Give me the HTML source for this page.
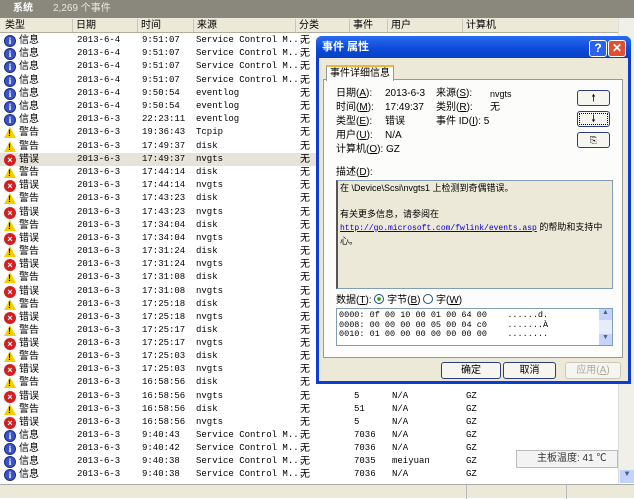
<!DOCTYPE html>
<html><head><meta charset="utf-8"><style>
*{margin:0;padding:0;box-sizing:border-box}
body{width:634px;height:498px;overflow:hidden;background:#fff;font-family:"Liberation Mono","Noto Sans CJK SC",monospace;font-size:9px;color:#000;position:relative}
.cj{font-family:"Liberation Sans","Noto Sans CJK SC",sans-serif}
#top{position:absolute;left:0;top:0;width:634px;height:18px;background:#8a887c;color:#fff;font-size:10px;line-height:14px}
#hdr{position:absolute;left:0;top:18px;width:618px;height:15px;background:#ece9d8;border-bottom:1px solid #b0ad9c;font-size:10px;line-height:13px}
#hdr span{position:absolute;top:1px;border-left:1px solid #c8c5b2;padding-left:3px;height:13px}
.r{position:absolute;left:0;width:618px;height:13px;line-height:13px}
.r span{position:absolute;top:0;white-space:nowrap}
.r span.cj{font-size:10px}
.hl{background:#e6e4da}
.ic{position:absolute;left:4px;top:1px;width:12px;height:12px}
.i{border-radius:50%;background:#3a55c8;border:1px solid #1b2a80;color:#fff;font:bold 9px "Liberation Serif";text-align:center;line-height:10px}
.w{width:0;height:0;border-left:6px solid transparent;border-right:6px solid transparent;border-bottom:11px solid #f5d000}
.w:after{content:"!";position:absolute;left:-2px;top:1px;font:bold 9px "Liberation Sans";color:#000}
.e{border-radius:50%;background:#d22020;color:#fff;font:bold 9px "Liberation Sans";text-align:center;line-height:12px}
#sb{position:absolute;left:618px;top:18px;width:16px;height:465px;background:#f0efe8;border-left:1px solid #ddd}
#status{position:absolute;left:0;top:484px;width:634px;height:14px;background:#ece9d8;border-top:1px solid #aaa}
#dlg{position:absolute;left:316px;top:36px;width:315px;height:348px;background:#0b3ed0;border-radius:6px 6px 0 0}
#tb{height:22px;color:#fff;font:bold 11px "Liberation Sans","Noto Sans CJK SC",sans-serif;line-height:22px;padding-left:6px;background:linear-gradient(#2a6cf0,#0a4ad8 60%,#0840c4);border-radius:6px 6px 0 0}
#body{position:absolute;left:3px;top:22px;width:309px;height:323px;background:#ece9d8}
.btn{position:absolute;background:#f6f5ef;border:1px solid #2c3d7a;border-radius:3px;text-align:center;font-size:10px;line-height:15px}
.lbl{position:absolute;font-size:10px;line-height:12px;white-space:nowrap}
</style></head><body>
<div id="top" class="cj"><span style="position:absolute;left:13px;top:2px;font-weight:bold">系统</span><span style="position:absolute;left:53px;top:2px;color:#e8e8e0">2,269 个事件</span></div>
<div id="hdr" class="cj"><span style="left:2px;border:0">类型</span><span style="left:72px">日期</span><span style="left:137px">时间</span><span style="left:193px">来源</span><span style="left:295px">分类</span><span style="left:349px">事件</span><span style="left:387px">用户</span><span style="left:462px">计算机</span></div>

<div class="r" style="top:34px"><i class="ic i">i</i><span class="cj" style="left:19px">信息</span><span style="left:77px">2013-6-4</span><span style="left:142px">9:51:07</span><span style="left:196px">Service Control M...</span><span class="cj" style="left:300px">无</span></div>
<div class="r" style="top:47px"><i class="ic i">i</i><span class="cj" style="left:19px">信息</span><span style="left:77px">2013-6-4</span><span style="left:142px">9:51:07</span><span style="left:196px">Service Control M...</span><span class="cj" style="left:300px">无</span></div>
<div class="r" style="top:60px"><i class="ic i">i</i><span class="cj" style="left:19px">信息</span><span style="left:77px">2013-6-4</span><span style="left:142px">9:51:07</span><span style="left:196px">Service Control M...</span><span class="cj" style="left:300px">无</span></div>
<div class="r" style="top:74px"><i class="ic i">i</i><span class="cj" style="left:19px">信息</span><span style="left:77px">2013-6-4</span><span style="left:142px">9:51:07</span><span style="left:196px">Service Control M...</span><span class="cj" style="left:300px">无</span></div>
<div class="r" style="top:87px"><i class="ic i">i</i><span class="cj" style="left:19px">信息</span><span style="left:77px">2013-6-4</span><span style="left:142px">9:50:54</span><span style="left:196px">eventlog</span><span class="cj" style="left:300px">无</span></div>
<div class="r" style="top:100px"><i class="ic i">i</i><span class="cj" style="left:19px">信息</span><span style="left:77px">2013-6-4</span><span style="left:142px">9:50:54</span><span style="left:196px">eventlog</span><span class="cj" style="left:300px">无</span></div>
<div class="r" style="top:113px"><i class="ic i">i</i><span class="cj" style="left:19px">信息</span><span style="left:77px">2013-6-3</span><span style="left:142px">22:23:11</span><span style="left:196px">eventlog</span><span class="cj" style="left:300px">无</span></div>
<div class="r" style="top:126px"><i class="ic w"></i><span class="cj" style="left:19px">警告</span><span style="left:77px">2013-6-3</span><span style="left:142px">19:36:43</span><span style="left:196px">Tcpip</span><span class="cj" style="left:300px">无</span></div>
<div class="r" style="top:140px"><i class="ic w"></i><span class="cj" style="left:19px">警告</span><span style="left:77px">2013-6-3</span><span style="left:142px">17:49:37</span><span style="left:196px">disk</span><span class="cj" style="left:300px">无</span></div>
<div class="r hl" style="top:153px"><i class="ic e">×</i><span class="cj" style="left:19px">错误</span><span style="left:77px">2013-6-3</span><span style="left:142px">17:49:37</span><span style="left:196px">nvgts</span><span class="cj" style="left:300px">无</span></div>
<div class="r" style="top:166px"><i class="ic w"></i><span class="cj" style="left:19px">警告</span><span style="left:77px">2013-6-3</span><span style="left:142px">17:44:14</span><span style="left:196px">disk</span><span class="cj" style="left:300px">无</span></div>
<div class="r" style="top:179px"><i class="ic e">×</i><span class="cj" style="left:19px">错误</span><span style="left:77px">2013-6-3</span><span style="left:142px">17:44:14</span><span style="left:196px">nvgts</span><span class="cj" style="left:300px">无</span></div>
<div class="r" style="top:192px"><i class="ic w"></i><span class="cj" style="left:19px">警告</span><span style="left:77px">2013-6-3</span><span style="left:142px">17:43:23</span><span style="left:196px">disk</span><span class="cj" style="left:300px">无</span></div>
<div class="r" style="top:206px"><i class="ic e">×</i><span class="cj" style="left:19px">错误</span><span style="left:77px">2013-6-3</span><span style="left:142px">17:43:23</span><span style="left:196px">nvgts</span><span class="cj" style="left:300px">无</span></div>
<div class="r" style="top:219px"><i class="ic w"></i><span class="cj" style="left:19px">警告</span><span style="left:77px">2013-6-3</span><span style="left:142px">17:34:04</span><span style="left:196px">disk</span><span class="cj" style="left:300px">无</span></div>
<div class="r" style="top:232px"><i class="ic e">×</i><span class="cj" style="left:19px">错误</span><span style="left:77px">2013-6-3</span><span style="left:142px">17:34:04</span><span style="left:196px">nvgts</span><span class="cj" style="left:300px">无</span></div>
<div class="r" style="top:245px"><i class="ic w"></i><span class="cj" style="left:19px">警告</span><span style="left:77px">2013-6-3</span><span style="left:142px">17:31:24</span><span style="left:196px">disk</span><span class="cj" style="left:300px">无</span></div>
<div class="r" style="top:258px"><i class="ic e">×</i><span class="cj" style="left:19px">错误</span><span style="left:77px">2013-6-3</span><span style="left:142px">17:31:24</span><span style="left:196px">nvgts</span><span class="cj" style="left:300px">无</span></div>
<div class="r" style="top:271px"><i class="ic w"></i><span class="cj" style="left:19px">警告</span><span style="left:77px">2013-6-3</span><span style="left:142px">17:31:08</span><span style="left:196px">disk</span><span class="cj" style="left:300px">无</span></div>
<div class="r" style="top:285px"><i class="ic e">×</i><span class="cj" style="left:19px">错误</span><span style="left:77px">2013-6-3</span><span style="left:142px">17:31:08</span><span style="left:196px">nvgts</span><span class="cj" style="left:300px">无</span></div>
<div class="r" style="top:298px"><i class="ic w"></i><span class="cj" style="left:19px">警告</span><span style="left:77px">2013-6-3</span><span style="left:142px">17:25:18</span><span style="left:196px">disk</span><span class="cj" style="left:300px">无</span></div>
<div class="r" style="top:311px"><i class="ic e">×</i><span class="cj" style="left:19px">错误</span><span style="left:77px">2013-6-3</span><span style="left:142px">17:25:18</span><span style="left:196px">nvgts</span><span class="cj" style="left:300px">无</span></div>
<div class="r" style="top:324px"><i class="ic w"></i><span class="cj" style="left:19px">警告</span><span style="left:77px">2013-6-3</span><span style="left:142px">17:25:17</span><span style="left:196px">disk</span><span class="cj" style="left:300px">无</span></div>
<div class="r" style="top:337px"><i class="ic e">×</i><span class="cj" style="left:19px">错误</span><span style="left:77px">2013-6-3</span><span style="left:142px">17:25:17</span><span style="left:196px">nvgts</span><span class="cj" style="left:300px">无</span></div>
<div class="r" style="top:350px"><i class="ic w"></i><span class="cj" style="left:19px">警告</span><span style="left:77px">2013-6-3</span><span style="left:142px">17:25:03</span><span style="left:196px">disk</span><span class="cj" style="left:300px">无</span></div>
<div class="r" style="top:363px"><i class="ic e">×</i><span class="cj" style="left:19px">错误</span><span style="left:77px">2013-6-3</span><span style="left:142px">17:25:03</span><span style="left:196px">nvgts</span><span class="cj" style="left:300px">无</span></div>
<div class="r" style="top:376px"><i class="ic w"></i><span class="cj" style="left:19px">警告</span><span style="left:77px">2013-6-3</span><span style="left:142px">16:58:56</span><span style="left:196px">disk</span><span class="cj" style="left:300px">无</span></div>
<div class="r" style="top:390px"><i class="ic e">×</i><span class="cj" style="left:19px">错误</span><span style="left:77px">2013-6-3</span><span style="left:142px">16:58:56</span><span style="left:196px">nvgts</span><span class="cj" style="left:300px">无</span><span style="left:354px">5</span><span style="left:392px">N/A</span><span style="left:466px">GZ</span></div>
<div class="r" style="top:403px"><i class="ic w"></i><span class="cj" style="left:19px">警告</span><span style="left:77px">2013-6-3</span><span style="left:142px">16:58:56</span><span style="left:196px">disk</span><span class="cj" style="left:300px">无</span><span style="left:354px">51</span><span style="left:392px">N/A</span><span style="left:466px">GZ</span></div>
<div class="r" style="top:416px"><i class="ic e">×</i><span class="cj" style="left:19px">错误</span><span style="left:77px">2013-6-3</span><span style="left:142px">16:58:56</span><span style="left:196px">nvgts</span><span class="cj" style="left:300px">无</span><span style="left:354px">5</span><span style="left:392px">N/A</span><span style="left:466px">GZ</span></div>
<div class="r" style="top:429px"><i class="ic i">i</i><span class="cj" style="left:19px">信息</span><span style="left:77px">2013-6-3</span><span style="left:142px">9:40:43</span><span style="left:196px">Service Control M...</span><span class="cj" style="left:300px">无</span><span style="left:354px">7036</span><span style="left:392px">N/A</span><span style="left:466px">GZ</span></div>
<div class="r" style="top:442px"><i class="ic i">i</i><span class="cj" style="left:19px">信息</span><span style="left:77px">2013-6-3</span><span style="left:142px">9:40:42</span><span style="left:196px">Service Control M...</span><span class="cj" style="left:300px">无</span><span style="left:354px">7036</span><span style="left:392px">N/A</span><span style="left:466px">GZ</span></div>
<div class="r" style="top:455px"><i class="ic i">i</i><span class="cj" style="left:19px">信息</span><span style="left:77px">2013-6-3</span><span style="left:142px">9:40:38</span><span style="left:196px">Service Control M...</span><span class="cj" style="left:300px">无</span><span style="left:354px">7035</span><span style="left:392px">meiyuan</span><span style="left:466px">GZ</span></div>
<div class="r" style="top:468px"><i class="ic i">i</i><span class="cj" style="left:19px">信息</span><span style="left:77px">2013-6-3</span><span style="left:142px">9:40:38</span><span style="left:196px">Service Control M...</span><span class="cj" style="left:300px">无</span><span style="left:354px">7036</span><span style="left:392px">N/A</span><span style="left:466px">GZ</span></div>

<div id="sb"><div style="position:absolute;left:1px;top:452px;width:14px;height:13px;background:#c4d3fb;color:#4d6185;text-align:center;font-size:8px">▼</div></div>
<div style="position:absolute;left:516px;top:450px;width:102px;height:18px;background:#f3f3f3;border:1px solid #bbb;font-size:10px;line-height:16px;padding-left:20px;color:#333" class="cj">主板温度: 41 ℃</div>
<div id="status"><div style="position:absolute;left:466px;top:0;width:1px;height:14px;background:#bbb"></div><div style="position:absolute;left:566px;top:0;width:1px;height:14px;background:#bbb"></div></div>

<div id="dlg">
<div id="tb">事件 属性</div>
<div style="position:absolute;left:273px;top:4px;width:18px;height:17px;background:#2a62ea;border:1px solid #fff;border-radius:3px;color:#fff;font:bold 12px 'Liberation Sans';text-align:center;line-height:15px">?</div>
<div style="position:absolute;left:292px;top:4px;width:18px;height:17px;background:#e05030;border:1px solid #fff;border-radius:3px;color:#fff;font:bold 12px 'Liberation Sans';text-align:center;line-height:15px">✕</div>
<div id="body" class="cj">
<div style="position:absolute;left:4px;top:21px;width:300px;height:279px;background:#fcfcfa;border:1px solid #919b9c"></div>
<div style="position:absolute;left:7px;top:7px;width:68px;height:16px;background:#fcfcfa;border:1px solid #919b9c;border-bottom:0;border-top:2px solid #f5b33c;font-size:10px;text-align:center;line-height:13px">事件详细信息</div>
<div class="lbl" style="left:17px;top:30px">日期(<u>A</u>):</div><div class="lbl" style="left:66px;top:30px">2013-6-3</div><div class="lbl" style="left:117px;top:30px">来源(<u>S</u>):</div><div class="lbl" style="left:171px;top:30px;font-size:9px">nvgts</div>
<div class="lbl" style="left:17px;top:44px">时间(<u>M</u>):</div><div class="lbl" style="left:66px;top:44px">17:49:37</div><div class="lbl" style="left:117px;top:44px">类别(<u>R</u>):</div><div class="lbl" style="left:171px;top:44px">无</div>
<div class="lbl" style="left:17px;top:58px">类型(<u>E</u>):</div><div class="lbl" style="left:66px;top:58px">错误</div><div class="lbl" style="left:117px;top:58px">事件 ID(<u>I</u>): 5</div>
<div class="lbl" style="left:17px;top:72px">用户(<u>U</u>):</div><div class="lbl" style="left:66px;top:72px">N/A</div>
<div class="lbl" style="left:17px;top:86px">计算机(<u>O</u>): GZ</div>
<div class="btn" style="left:258px;top:32px;width:33px;height:16px">🠕</div>
<div class="btn" style="left:258px;top:53px;width:33px;height:16px;outline:1px dotted #000;outline-offset:-3px">🠗</div>
<div class="btn" style="left:258px;top:74px;width:33px;height:16px;font-size:9px">⎘</div>
<div class="lbl" style="left:17px;top:109px">描述(<u>D</u>):</div>
<div style="position:absolute;left:17px;top:122px;width:277px;height:109px;background:#ece9d8;border:1px solid #7f9db9;border-left:2px solid #555;font-size:9px;line-height:13px;padding:1px 2px;white-space:nowrap;overflow:hidden">在 \Device\Scsi\nvgts1 上检测到奇偶错误。<br><br>有关更多信息，请参阅在<br><span style="color:#00c;text-decoration:underline;font-family:'Liberation Mono',monospace;font-size:8px">http://go.microsoft.com/fwlink/events.asp</span> 的帮助和支持中<br>心。</div>
<div class="lbl" style="left:17px;top:236px">数据(<u>T</u>): <span style="display:inline-block;width:10px;height:10px;border:1px solid #1c5180;border-radius:50%;background:radial-gradient(#2a9a2a 30%,#fff 35%);vertical-align:-1px"></span> 字节(<u>B</u>) <span style="display:inline-block;width:10px;height:10px;border:1px solid #1c5180;border-radius:50%;background:#fff;vertical-align:-1px"></span> 字(<u>W</u>)</div>
<div style="position:absolute;left:17px;top:250px;width:277px;height:38px;background:#fff;border:1px solid #7f9db9;font-family:'Liberation Mono',monospace;font-size:8.5px;line-height:9.5px;padding:2px;white-space:pre">0000: 0f 00 10 00 01 00 64 00    ......d.
0008: 00 00 00 00 05 00 04 c0    .......À
0010: 01 00 00 00 00 00 00 00    ........</div>
<div style="position:absolute;left:280px;top:251px;width:13px;height:36px;background:#e6ecfb"><div style="height:11px;background:#c4d3fb;font-size:7px;text-align:center;color:#4d6185">▲</div><div style="position:absolute;bottom:0;width:13px;height:11px;background:#c4d3fb;font-size:7px;text-align:center;color:#4d6185">▼</div></div>
<div class="btn" style="left:122px;top:304px;width:60px;height:17px">确定</div>
<div class="btn" style="left:184px;top:304px;width:53px;height:17px">取消</div>
<div class="btn" style="left:246px;top:304px;width:56px;height:17px;color:#aca899;border-color:#c9c7ba">应用(<u>A</u>)</div>
</div></div>
</body></html>
